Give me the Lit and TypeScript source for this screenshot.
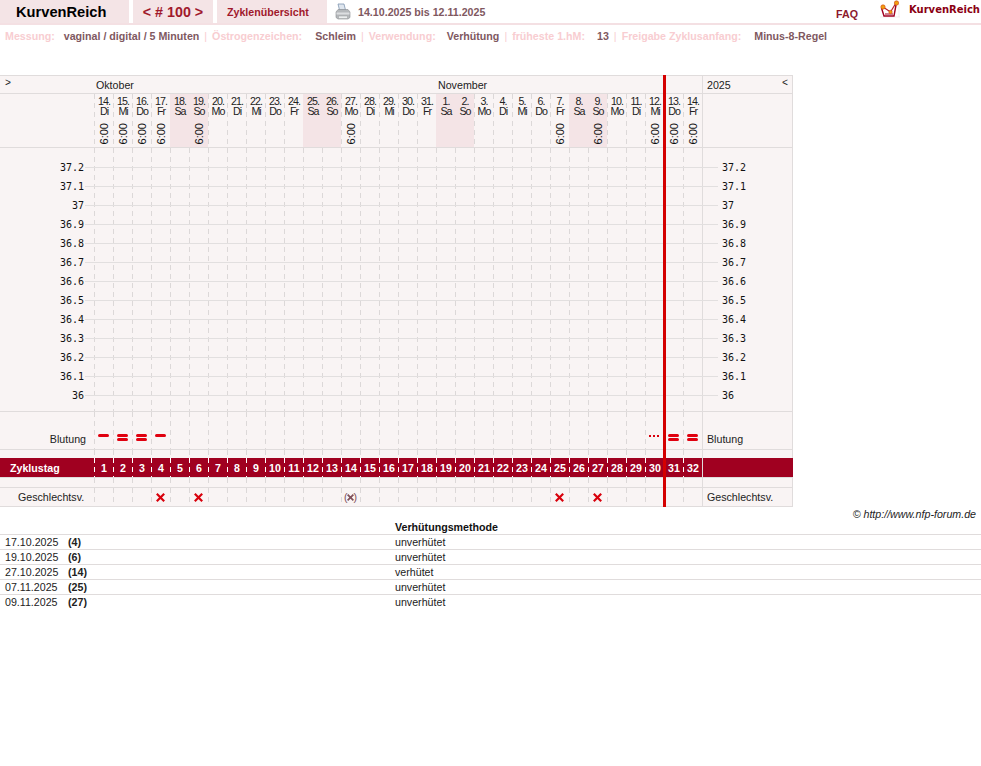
import { LitElement, html, css, svg } from "lit";
import { customElement } from "lit/decorators.js";
import { classMap } from "lit/directives/class-map.js";

type Day = { n: number; wd: string; time: boolean; we: boolean };
const wds = ["Di", "Mi", "Do", "Fr", "Sa", "So", "Mo"];
const timed = new Set([0, 1, 2, 3, 5, 13, 24, 26, 29, 30, 31]);
const days: Day[] = Array.from({ length: 32 }, (_, i) => {
  const wd = wds[i % 7];
  const n = i < 18 ? 14 + i : i - 17;
  return { n, wd, time: timed.has(i), we: wd === "Sa" || wd === "So" };
});
const temps = ["37.2", "37.1", "37", "36.9", "36.8", "36.7", "36.6", "36.5", "36.4", "36.3", "36.2", "36.1", "36"];
const bleed: Record<number, string> = { 0: "one", 1: "two", 2: "two", 3: "one", 29: "dots", 30: "two", 31: "two" };
const sex: Record<number, string> = { 3: "x", 5: "x", 13: "px", 24: "x", 26: "x" };
const notes = [
  ["17.10.2025", "(4)", "unverhütet"],
  ["19.10.2025", "(6)", "unverhütet"],
  ["27.10.2025", "(14)", "verhütet"],
  ["07.11.2025", "(25)", "unverhütet"],
  ["09.11.2025", "(27)", "unverhütet"],
];
const meta: [string, string, string][] = [
  ["Messung:", "vaginal / digital / 5 Minuten", "g1"],
  ["Östrogenzeichen:", "Schleim", "g2"],
  ["Verwendung:", "Verhütung", "g3"],
  ["früheste 1.hM:", "13", "g4"],
  ["Freigabe Zyklusanfang:", "Minus-8-Regel", "g2"],
];

const cross = svg`<svg class="cross" width="9" height="9" viewBox="0 0 9 9"><path d="M.8.8 8.200 8.200M8.200.8.8 8.200" stroke="currentColor" stroke-width="2.200" fill="none"/></svg>`;

@customElement("app-root")
export class AppRoot extends LitElement {
  static styles = css`
    :host { display: block; width: 981px; height: 766px; background: #fff; font-family: "Liberation Sans", Arial, sans-serif; font-size: 10.67px; color: #222; overflow: hidden; }
    .top { display: flex; height: 25px; box-sizing: border-box; border-bottom: 2px solid #f4e0e3; align-items: stretch; }
    .tab { background: #f4e4e6; display: flex; align-items: center; }
    .brand { width: 129px; font-size: 14.67px; font-weight: 700; color: #000; margin-right: 4px; padding-left: 16px; box-sizing: border-box; }
    .nav { width: 80px; justify-content: center; font-size: 14.3px; font-weight: 700; color: #a0182c; margin-right: 4px; }
    .over { width: 110px; padding-left: 10px; box-sizing: border-box; font-size: 10.67px; font-weight: 700; color: #a0182c; }
    .printer { margin: 3px 7px 0 8px; }
    .range { align-self: center; font-size: 10.67px; font-weight: 700; color: #80585f; }
    .spacer { flex: 1; }
    .faq { align-self: flex-start; font-size: 10.67px; font-weight: 700; line-height: 12px; color: #8c1a2c; margin-top: 8px; margin-right: 22px; }
    .logo { margin-right: 9px; }
    .logotext { font-family: "DejaVu Sans", sans-serif; font-size: 10px; font-weight: 700; line-height: 12px; color: #8a0012; align-self: flex-start; margin-top: 4px; margin-right: 1px; }
    .meta { display: flex; height: 22px; align-items: center; padding-left: 5px; font-size: 10.67px; font-weight: 700; white-space: nowrap; }
    .meta .l { color: #f8cdd1; }
    .meta .v { color: #80585f; }
    .meta .g1 { margin-left: 9px; }
    .meta .g2 { margin-left: 13px; }
    .meta .g3 { margin-left: 11px; }
    .meta .g4 { margin-left: 12px; }
    .meta .sep { color: #f8cdd1; font-weight: 400; margin: 0 5px; }
    .chart { position: relative; width: 793px; margin-top: 28px; background: #f9f4f4; border-top: 1px solid #e0dcdc; border-bottom: 1px solid #e0dcdc; box-sizing: border-box; }
    .row { display: grid; grid-template-columns: 94px repeat(32, 19px) 91px; border-bottom: 1px solid #e0dcdc; box-sizing: border-box; }
    .rt { border-left: 1px solid #e0dcdc; box-sizing: border-box; }
    .end { border-right: 1px solid #e0dcdc; }
    .c { box-sizing: border-box; display: flex; align-items: center; justify-content: center; min-width: 0; padding-left: 1px;
      background-image: repeating-linear-gradient(180deg, #dcd8d8 0 5px, transparent 5px 9px); background-size: 1px 100%; background-repeat: no-repeat; background-position: 0 0; }
    .monthrow { height: 18px; grid-template-columns: 94px 342px 266px 91px; line-height: 18px; }
    .monthrow > div { padding-left: 2px; }
    .monthrow .left { padding-left: 5px; font-family: "Liberation Mono", monospace; font-size: 10px; line-height: 16px; }
    .monthrow .rt { padding-left: 4px; padding-right: 4px; display: flex; justify-content: space-between; }
    .monthrow .arrow { font-family: "Liberation Mono", monospace; font-size: 10px; line-height: 16px; }
    .daysrow { height: 54px; }
    .day { flex-direction: column; justify-content: flex-start; line-height: 10px; letter-spacing: -1px; padding-top: 2px; }
    .day.we { background-color: #f4e4e6; background-image: none; }
    .day .t { writing-mode: vertical-rl; transform: rotate(180deg); font-size: 11px; letter-spacing: 0; line-height: 12px; margin-top: 7px; color: #111; }
    .temps { height: 264px; padding-top: 10px; position: relative; display: block; }
    .grid { position: absolute; inset: 0; display: grid; grid-template-columns: 94px repeat(32, 19px) 91px; }
    .lines { position: relative; display: flex; flex-direction: column; }
    .line { height: 19px; display: grid; grid-template-columns: 85px 1fr 75px; align-items: center; font-family: "DejaVu Sans Mono", monospace; font-size: 10px; color: #111; }
    .line .a { text-align: right; padding-right: 1px; }
    .line .m { height: 1px; background: #e2dfdf; }
    .line .b { padding-left: 4px; }
    .bleedrow { height: 38px; }
    .bleedrow .lbl { display: flex; align-items: flex-end; justify-content: flex-end; padding: 0 8px 4px 0; }
    .bleedrow .lblr { display: flex; align-items: flex-end; padding: 0 0 4px 4px; }
    .bleedrow .c { align-items: flex-start; padding-top: 22px; padding-left: 0; }
    .one, .two i { display: block; width: 11px; height: 3px; border-radius: 2px; background: #e0000f; }
    .two { display: flex; flex-direction: column; gap: 1px; }
    .dots { display: block; width: 11px; height: 2px; margin-top: 1px; background: repeating-linear-gradient(90deg, #d8000c 0 2px, transparent 2px 4px); }
    .thin { height: 8px; border-bottom: 0; }
    .thin2 { height: 10px; }
    .cycle { height: 20px; background: #a00020; color: #fff; font-weight: 700; border-bottom: 1px solid #e0dcdc; }
    .cycle .name { display: flex; align-items: center; padding-left: 10px; }
    .cycle .c { background-image: repeating-linear-gradient(180deg, #fff 0 5px, transparent 5px 9px); }
    .sexrow { height: 18px; border-bottom: 0; }
    .sexrow .c { padding-left: 0; }
    .sexrow .lbl { display: flex; align-items: center; padding-left: 18px; }
    .sexrow .lblr { display: flex; align-items: center; padding-left: 4px; }
    .cross { display: block; color: #d8000c; }
    .px { display: flex; align-items: center; color: #80505a; line-height: 9px; }
    .px .cross { margin: 0 -0.5px; width: 7px; height: 7px; color: #80505a; }
    .vline { position: absolute; left: 663px; top: -1px; bottom: -1px; width: 3px; background: #d40000; }
    .copy { text-align: right; padding-right: 5px; font-style: italic; line-height: 14px; height: 14px; }
    table { border-collapse: separate; border-spacing: 0; table-layout: fixed; width: 981px; }
    th, td { padding: 0; height: 14px; line-height: 14px; text-align: left; font-weight: 400; border-bottom: 1px solid #e0dcdc; white-space: nowrap; }
    th { height: 13px; line-height: 13px; }
    tr:last-child td { border-bottom: 0; }
    th.m { font-weight: 700; color: #111; }
    td.d { padding-left: 5px; }
    td.n { font-weight: 700; }
    .c1 { width: 68px; }
    .c2 { width: 327px; }
  `;

  private cells(fn: (d: Day, i: number) => unknown = () => "") {
    return days.map((d, i) => html`<div class="c">${fn(d, i)}</div>`);
  }

  render() {
    return html`
      <header class="top">
        <div class="tab brand">KurvenReich</div>
        <div class="tab nav">&lt; # 100 &gt;</div>
        <div class="tab over">Zyklenübersicht</div>
        <svg class="printer" width="16" height="18" viewBox="0 0 16 18">
          <path d="M3 1h6l1.500 6h-6z" fill="#dfe6ee" stroke="#7f95b0" stroke-width=".8"/>
          <path d="M1 9l2-2.500h10l2 2.500v5.500l-2 1.500H3l-2-1.500z" fill="#b5b8bb" stroke="#8a8d90" stroke-width=".6"/>
          <path d="M1.500 9.500h13v2h-13z" fill="#dcdee0"/>
          <path d="M3.500 13h9v2.500h-9z" fill="#eceeef" stroke="#9a9c9f" stroke-width=".5"/>
        </svg>
        <div class="range">14.10.2025 bis 12.11.2025</div>
        <div class="spacer"></div>
        <div class="faq">FAQ</div>
        <svg class="logo" width="20" height="18" viewBox="0 0 20 18">
          <path d="M0 17h20M19 4v13" fill="none" stroke="#eee6e6" stroke-width=".7"/>
          <path d="M1.500 8l2.500 8h10l2-11" fill="#fff" stroke="#a00020" stroke-width="1.400"/>
          <path d="M3 7l7.500 5L16 3" fill="none" stroke="#b0202a" stroke-width="1.200"/>
          <path d="M5 14h8" stroke="#a00020" stroke-width="1"/>
          <circle cx="3" cy="7" r="2.200" fill="#f0a010" stroke="#d04010" stroke-width=".6"/>
          <circle cx="10.500" cy="12" r="1.700" fill="#f0a010" stroke="#d04010" stroke-width=".6"/>
          <circle cx="16.500" cy="3" r="2.200" fill="#f0a010" stroke="#d04010" stroke-width=".6"/>
        </svg>
        <div class="logotext">KurvenReich</div>
      </header>
      <div class="meta">
        ${meta.map(
          ([l, v, g], i) => html`${i ? html`<span class="sep">|</span>` : ""}<span class="l">${l}</span><span class="v ${g}">${v}</span>`
        )}
      </div>
      <div class="chart">
        <div class="row monthrow">
          <div class="left">&gt;</div>
          <div>Oktober</div>
          <div>November</div>
          <div class="rt end"><span>2025</span><span class="arrow">&lt;</span></div>
        </div>
        <div class="row daysrow">
          <div></div>
          ${days.map(
            (d) => html`<div class=${classMap({ c: true, day: true, we: d.we })}>
              <span>${d.n}.</span><span>${d.wd}</span>
              ${d.time ? html`<span class="t">6:00</span>` : ""}
            </div>`
          )}
          <div class="rt end"></div>
        </div>
        <div class="row temps">
          <div class="grid"><div></div>${this.cells()}<div class="rt end"></div></div>
          <div class="lines">
            ${temps.map((t) => html`<div class="line"><span class="a">${t}</span><span class="m"></span><span class="b">${t}</span></div>`)}
          </div>
        </div>
        <div class="row bleedrow">
          <div class="lbl">Blutung</div>
          ${this.cells((_, i) => {
            const b = bleed[i];
            if (b === "two") return html`<span class="two"><i></i><i></i></span>`;
            if (b) return html`<span class=${b}></span>`;
            return "";
          })}
          <div class="rt end lblr">Blutung</div>
        </div>
        <div class="row thin"><div></div>${this.cells()}<div class="rt end"></div></div>
        <div class="row cycle">
          <div class="name">Zyklustag</div>
          ${this.cells((_, i) => i + 1)}
          <div class="rt"></div>
        </div>
        <div class="row thin2"><div></div>${this.cells()}<div class="rt end"></div></div>
        <div class="row sexrow">
          <div class="lbl">Geschlechtsv.</div>
          ${this.cells((_, i) =>
            sex[i] === "x" ? cross : sex[i] === "px" ? html`<span class="px">(${cross})</span>` : ""
          )}
          <div class="rt end lblr">Geschlechtsv.</div>
        </div>
        <div class="vline"></div>
      </div>
      <div class="copy">© http://www.nfp-forum.de</div>
      <table>
        <colgroup><col class="c1" /><col class="c2" /><col /></colgroup>
        <thead><tr><th></th><th></th><th class="m">Verhütungsmethode</th></tr></thead>
        <tbody>
          ${notes.map(
            ([d, n, m]) => html`<tr><td class="d">${d}</td><td class="n">${n}</td><td>${m}</td></tr>`
          )}
        </tbody>
      </table>
    `;
  }
}
